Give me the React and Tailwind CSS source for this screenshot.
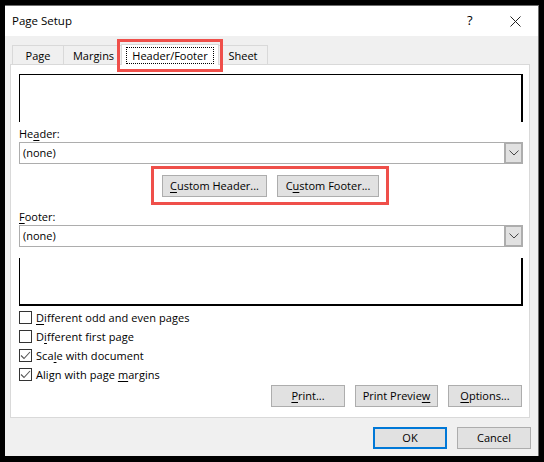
const FONT = "font-['Open_Sans','Noto_Sans',sans-serif]";

function U({ children }) {
  return <span className="underline underline-offset-[2px] decoration-1">{children}</span>;
}

function Btn({ w, children, primary }) {
  return (
    <div
      className={`flex items-center justify-center h-[22px] pt-[1px] bg-[#e1e1e1] text-[11px] text-black ${w} ${
        primary ? "border-2 border-[#0078d7]" : "border border-[#adadad]"
      }`}
    >
      {children}
    </div>
  );
}

function Tab({ w, children }) {
  return (
    <div className={`flex items-center justify-center h-[19px] pt-[2px] bg-[#f0f0f0] border border-b-0 border-[#d9d9d9] -ml-px text-[11px] text-black ${w}`}>
      {children}
    </div>
  );
}

function Select({ label }) {
  return (
    <div className="flex items-center h-[22px] w-[504px] bg-white border border-[#adadad] pl-[3px] text-[11px] text-black">
      <span className="flex-1 pt-[1px]">{label}</span>
      <span className="flex items-center justify-center w-[19px] h-[22px] -my-px -mr-px bg-[#e1e1e1] border-2 border-[#adadad]">
        <svg width="10" height="6" viewBox="0 0 10 6" fill="none" stroke="#444" strokeWidth="1">
          <path d="M0.5 0.6 L5 5 L9.5 0.6" />
        </svg>
      </span>
    </div>
  );
}

function Check({ checked, children }) {
  return (
    <div className="flex items-center h-[19px] gap-[4px] text-[11px] tracking-[0.07px] text-black">
      <span className="flex items-center justify-center w-[13px] h-[13px] bg-white border border-[#333]">
        {checked && (
          <svg width="11" height="11" viewBox="0 0 11 11" fill="none" stroke="#555" strokeWidth="1.1">
            <path d="M1 5.5 L4 8.5 L10 2" />
          </svg>
        )}
      </span>
      <span className="pt-[1px]">{children}</span>
    </div>
  );
}

export default function App() {
  return (
    <div className={`relative w-[544px] h-[462px] bg-black pt-[5px] pl-[5px] ${FONT}`}>
      <div className="flex flex-col w-[534px] h-[451px] border-t border-r border-[#6e6e6e] bg-[#f0f0f0]">
        <div className="flex items-center h-[30px] bg-white pl-[7px] text-black shrink-0">
          <span className="flex-1 text-[11.5px]">Page Setup</span>
          <span className="w-[12px] text-[13px] mr-[31px]">?</span>
          <svg className="mr-[17px]" width="11" height="11" viewBox="0 0 11 11" fill="none" stroke="#222" strokeWidth="1">
            <path d="M0.5 0.5 L10.5 10.5 M10.5 0.5 L0.5 10.5" />
          </svg>
        </div>

        <div className="pl-[5px] pt-[9px]">
          <div className="relative flex items-end h-[19px] pl-[3px]">
            <Tab w="w-[52px]">Page</Tab>
            <Tab w="w-[59px] pl-[2px]">Margins</Tab>
            <div className="flex items-center justify-center w-[98px] h-[21px] -ml-px -mb-px bg-white border border-b-0 border-[#d9d9d9] text-[11px] text-black z-10">
              <span className="border border-dotted border-black px-[5px] leading-[15px]">Header/Footer</span>
            </div>
            <Tab w="w-[50px]">Sheet</Tab>
          </div>

          <div className="w-[520px] h-[354px] bg-white border border-[#d9d9d9] pl-[8px] pt-[9px]">
            <div className="w-[504px] h-[48px] border-t border-l border-r-2 border-black" />
            <div className="h-[20px] flex items-end text-[11px] text-black">
              <span>He<U>a</U>der:</span>
            </div>
            <Select label="(none)" />

            <div className="flex gap-[10px] pl-[143px] w-[504px] mt-[11px]">
              <Btn w="w-[105px]"><span><U>C</U>ustom Header...</span></Btn>
              <Btn w="w-[102px]"><span>C<U>u</U>stom Footer...</span></Btn>
            </div>

            <div className="h-[28px] flex items-end text-[11px] text-black">
              <span><U>F</U>ooter:</span>
            </div>
            <Select label="(none)" />

            <div className="w-[504px] h-[48px] mt-[11px] border-b-2 border-l border-r-2 border-black" />

            <div className="flex flex-col mt-[2px]">
              <Check><U>D</U>ifferent odd and even pages</Check>
              <Check>D<U>i</U>fferent first page</Check>
              <Check checked>Sca<U>l</U>e with document</Check>
              <Check checked>Align with page <U>m</U>argins</Check>
            </div>

            <div className="flex justify-end gap-[10px] w-[503px] mt-[1px]">
              <Btn w="w-[74px]"><span><U>P</U>rint...</span></Btn>
              <Btn w="w-[83px]"><span>Print Previe<U>w</U></span></Btn>
              <Btn w="w-[74px]"><span><U>O</U>ptions...</span></Btn>
            </div>
          </div>
        </div>

        <div className="flex justify-end gap-[10px] pr-[7px] mt-[9px]">
          <Btn primary w="w-[74px]">OK</Btn>
          <Btn w="w-[74px]">Cancel</Btn>
        </div>
      </div>

      <div className="absolute left-[117px] top-[39px] w-[106px] h-[33px] border-[3px] border-[#ef4f4a] z-20" />
      <div className="absolute left-[151px] top-[166px] w-[238px] h-[39px] border-[3px] border-[#ef4f4a] z-20" />
    </div>
  );
}
